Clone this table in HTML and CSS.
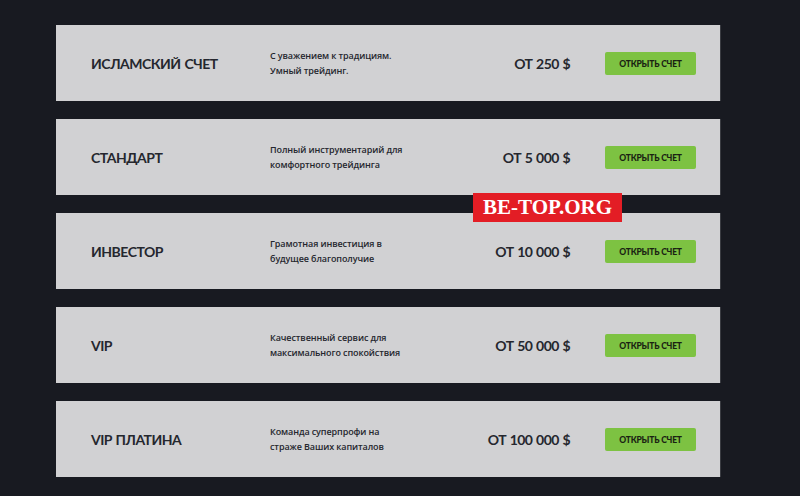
FILE: index.html
```html
<!DOCTYPE html>
<html lang="ru">
<head>
<meta charset="utf-8">
<link rel="stylesheet" href="styles.css">
</head>
<body>
<div class="list">
  <div class="card">
    <div class="title">ИСЛАМСКИЙ СЧЕТ</div>
    <div class="desc">С уважением к традициям.<br>Умный трейдинг.</div>
    <div class="price">ОТ 250 $</div>
    <a class="btn">ОТКРЫТЬ СЧЕТ</a>
  </div>
  <div class="card">
    <div class="title">СТАНДАРТ</div>
    <div class="desc">Полный инструментарий для<br>комфортного трейдинга</div>
    <div class="price">ОТ 5 000 $</div>
    <a class="btn">ОТКРЫТЬ СЧЕТ</a>
  </div>
  <div class="card">
    <div class="title">ИНВЕСТОР</div>
    <div class="desc">Грамотная инвестиция в<br>будущее благополучие</div>
    <div class="price">ОТ 10 000 $</div>
    <a class="btn">ОТКРЫТЬ СЧЕТ</a>
  </div>
  <div class="card">
    <div class="title">VIP</div>
    <div class="desc">Качественный сервис для<br>максимального спокойствия</div>
    <div class="price">ОТ 50 000 $</div>
    <a class="btn">ОТКРЫТЬ СЧЕТ</a>
  </div>
  <div class="card">
    <div class="title">VIP ПЛАТИНА</div>
    <div class="desc">Команда суперпрофи на<br>страже Ваших капиталов</div>
    <div class="price">ОТ 100 000 $</div>
    <a class="btn">ОТКРЫТЬ СЧЕТ</a>
  </div>
</div>
<div class="watermark">BE-TOP.ORG</div>
</body>
</html>
```
FILE: styles.css
```css
html, body {
  margin: 0;
  padding: 0;
  background: #181a21;
  height: 496px;
  overflow: hidden;
}
body {
  font-family: "Open Sans", "Noto Sans", sans-serif;
  color: #25272e;
}
.list {
  display: flex;
  flex-direction: column;
  gap: 18px;
  padding: 25px 0 0 56px;
  width: 665px;
}
.card {
  height: 76px;
  background: #d1d1d3;
  border-right: 1px solid #3a3c42;
  display: grid;
  grid-template-columns: 179px 1fr auto 91px;
  align-items: center;
  padding: 0 24px 0 35px;
}
.title {
  font-family: "Lato", sans-serif;
  font-weight: 700;
  font-size: 14px;
  letter-spacing: -0.5px;
  word-spacing: 1px;
}
.desc {
  font-size: 9px;
  font-weight: 600;
  line-height: 15px;
  letter-spacing: -0.1px;
}
.price {
  font-family: "Lato", sans-serif;
  font-weight: 700;
  font-size: 14px;
  letter-spacing: -0.6px;
  word-spacing: 1px;
  margin-right: 35px;
}
.btn {
  height: 23px;
  background: #7dc242;
  border-radius: 2px;
  display: flex;
  align-items: center;
  justify-content: center;
  font-family: "Lato", sans-serif;
  font-weight: 900;
  font-size: 8.5px;
  letter-spacing: -0.2px;
  color: #1a2212;
  margin-top: 1px;
}
.watermark {
  position: absolute;
  left: 473px;
  top: 193px;
  width: 149px;
  height: 29px;
  background: #e31d25;
  color: #fff;
  font-family: "Liberation Serif", serif;
  font-weight: 700;
  font-size: 21px;
  display: flex;
  align-items: center;
  justify-content: center;
}
```
